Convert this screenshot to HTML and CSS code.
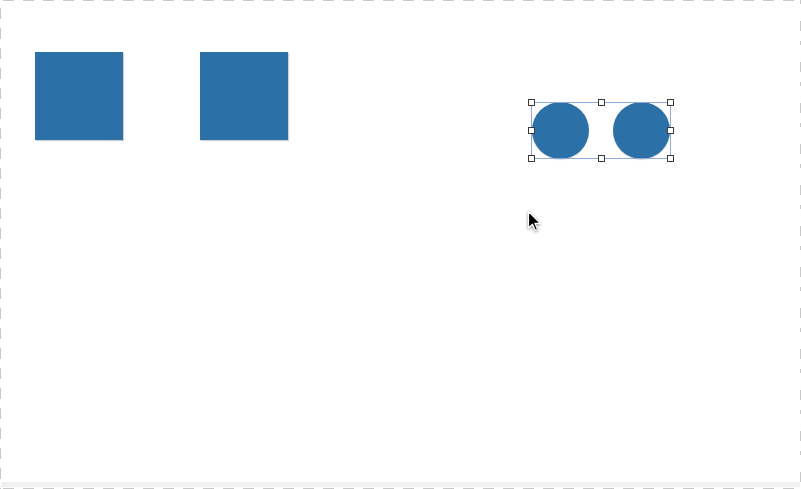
FILE: index.html
```html
<!DOCTYPE html>
<html>
<head>
<meta charset="utf-8">
<link rel="stylesheet" href="styles.css">
</head>
<body>
<div class="canvas">
  <div class="shape square sq1"></div>
  <div class="shape square sq2"></div>
  <div class="shape circle c1"></div>
  <div class="shape circle c2"></div>
  <div class="selection">
    <span class="handle h-tl"></span>
    <span class="handle h-tm"></span>
    <span class="handle h-tr"></span>
    <span class="handle h-ml"></span>
    <span class="handle h-mr"></span>
    <span class="handle h-bl"></span>
    <span class="handle h-bm"></span>
    <span class="handle h-br"></span>
  </div>
  <svg class="cursor" width="16" height="24" viewBox="0 0 16 24">
    <path d="M1.5 1.5 L1.5 18 L5.5 14.2 L8.3 20.5 L10.6 19.5 L7.9 13.3 L13.2 13.3 Z" fill="#000" stroke="#fff" stroke-width="1.2" stroke-linejoin="round"/>
  </svg>
  <div class="bottom-band"></div>
</div>
</body>
</html>
```

FILE: styles.css
```css
html, body {
  margin: 0;
  padding: 0;
  background: #fff;
}
.canvas {
  position: relative;
  width: 801px;
  height: 489px;
  overflow: hidden;
  background:
    repeating-linear-gradient(90deg, transparent 0 3px, #c8c8c8 3px 14px, transparent 14px 20px) 0 0 / 100% 1px no-repeat,
    repeating-linear-gradient(180deg, transparent 0 8px, #c8c8c8 8px 19px, transparent 19px 20px) 0 0 / 1px 100% no-repeat,
    repeating-linear-gradient(180deg, #c8c8c8 0 4px, transparent 4px 21px, #c8c8c8 21px 31px, transparent 31px 41px) 800px 0 / 1px 100% no-repeat,
    repeating-linear-gradient(90deg, transparent 0 3px, #c8c8c8 3px 14px, transparent 14px 20px) 0 488px / 100% 1px no-repeat,
    #fff;
}
.bottom-band {
  position: absolute;
  left: 1px;
  right: 1px;
  top: 482px;
  height: 5px;
  background: #f1f1f1;
}
.shape {
  position: absolute;
  background: #2b70a6;
}
.square {
  width: 88px;
  height: 88px;
  top: 52px;
  box-shadow: 1px 1px 1px rgba(0,0,0,0.18);
}
.sq1 { left: 35px; }
.sq2 { left: 200px; }
.circle {
  width: 57px;
  height: 57px;
  border-radius: 50%;
  top: 102px;
  box-shadow: 0 1px 1px rgba(0,0,0,0.15);
}
.c1 { left: 532px; }
.c2 { left: 613px; }
.selection {
  position: absolute;
  left: 531px;
  top: 102px;
  width: 138px;
  height: 55px;
  border: 1px solid #8faad8;
}
.handle {
  position: absolute;
  width: 5px;
  height: 5px;
  background: #fff;
  border: 1px solid #3a3a3a;
}
.h-tl { left: -4px; top: -4px; }
.h-tm { left: 66px; top: -4px; }
.h-tr { right: -4px; top: -4px; }
.h-ml { left: -4px; top: 24px; }
.h-mr { right: -4px; top: 24px; }
.h-bl { left: -4px; bottom: -4px; }
.h-bm { left: 66px; bottom: -4px; }
.h-br { right: -4px; bottom: -4px; }
.cursor {
  position: absolute;
  left: 527px;
  top: 210px;
  filter: drop-shadow(0 1px 1.5px rgba(0,0,0,0.45));
}
```
